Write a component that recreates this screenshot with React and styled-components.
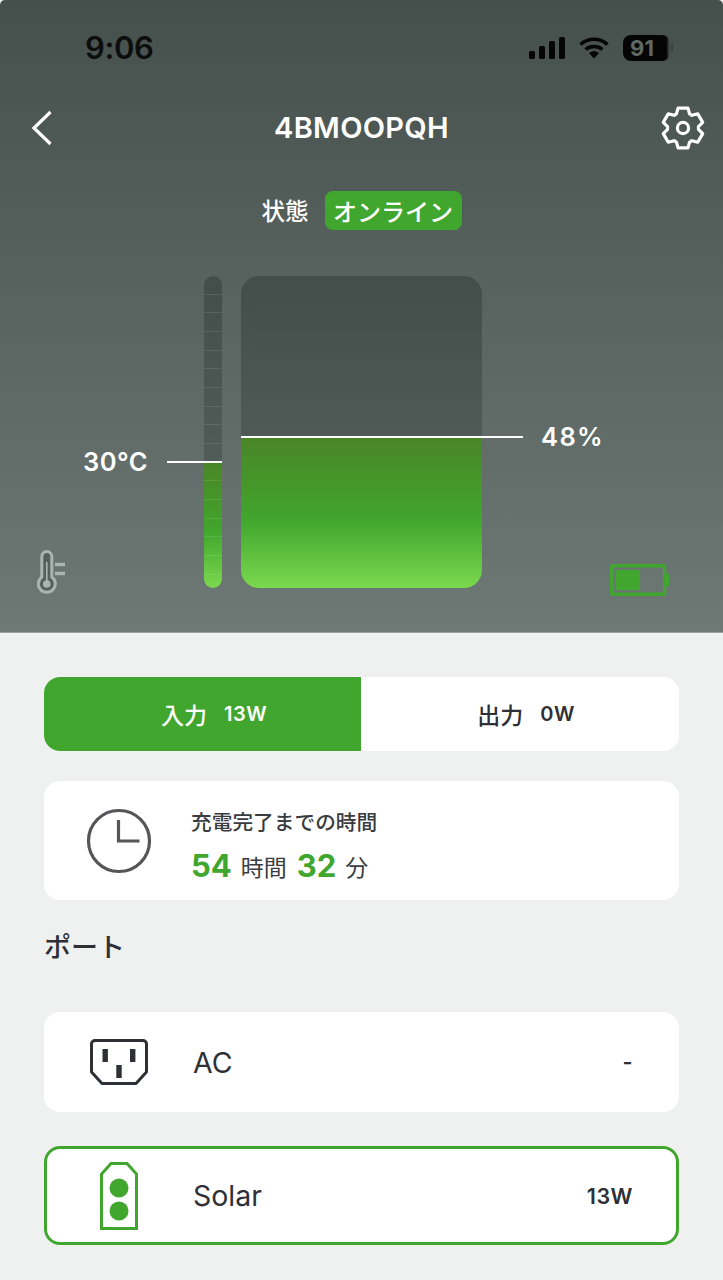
import React from "react";
import styled, { createGlobalStyle } from "styled-components";

const GREEN = "#41a62d";
const INK = "#2e3036";

const GlobalStyle = createGlobalStyle`
  html, body {
    margin: 0;
    padding: 0;
    background: #eff1f1;
  }
  body {
    font-family: Inter, "Noto Sans CJK JP", sans-serif;
  }
`;

const Page = styled.div`
  width: 723px;
  height: 1280px;
  overflow: hidden;
  display: flex;
  flex-direction: column;
  background: #eff1f1;
`;

const Hero = styled.section`
  height: 633px;
  box-sizing: border-box;
  background: linear-gradient(180deg, #454f4b 0%, #6e7975 100%);
  border-bottom: 1px solid #9aa19e;
  border-radius: 5px 5px 0 0;
  color: #fff;
`;

const StatusBar = styled.div`
  height: 96px;
  box-sizing: border-box;
  padding: 30px 53px 0 85px;
  display: flex;
  justify-content: space-between;
  align-items: flex-start;
`;

const Clock = styled.span`
  font-size: 31px;
  line-height: 36px;
  font-weight: 600;
  letter-spacing: -0.4px;
  color: #0c0e0d;
`;

const StatusIcons = styled.div`
  display: flex;
  align-items: center;
  gap: 14px;
  height: 36px;
`;

const PhoneBattery = styled.div`
  position: relative;
  width: 47px;
  height: 26px;
  border-radius: 8px;
  background: linear-gradient(90deg, #050505 0%, #050505 92%, #4d5854 100%);
  color: #5e6965;
  font-size: 22px;
  font-weight: 700;
  line-height: 26px;
  padding-right: 9px;
  box-sizing: border-box;
  text-align: center;

  &::after {
    content: "";
    position: absolute;
    right: -3px;
    top: 8px;
    width: 2px;
    height: 9px;
    border-radius: 1px;
    background: #38423e;
  }
`;

const NavBar = styled.div`
  height: 64px;
  box-sizing: border-box;
  padding: 0 17px 0 31px;
  display: grid;
  grid-template-columns: 1fr auto 1fr;
  align-items: center;

  & > svg:last-child {
    justify-self: end;
  }
`;

const Title = styled.h1`
  margin: 0 14px 2px 0;
  font-size: 29px;
  font-weight: 600;
  letter-spacing: 0.3px;
`;

const StatusRow = styled.div`
  margin-top: 30px;
  display: flex;
  justify-content: center;
  align-items: center;
  gap: 16px;
  height: 40px;
  font-size: 23.5px;
  font-weight: 500;
`;

const Pill = styled.span`
  background: ${GREEN};
  border-radius: 8px;
  height: 39px;
  padding: 0 8.5px;
  display: flex;
  align-items: center;
  font-size: 24px;
  font-weight: 500;
`;

const GaugeRow = styled.div`
  margin-top: 46px;
  height: 312px;
  display: flex;
  align-items: stretch;
`;

const ThermoSlot = styled.div`
  width: 204px;
  box-sizing: border-box;
  padding-left: 37px;
  display: flex;
  align-items: flex-end;
`;

const BatterySlot = styled.div`
  flex: 1;
  box-sizing: border-box;
  padding: 0 0 0 128px;
  display: flex;
  align-items: flex-end;
`;

const Gauge = styled.div`
  position: relative;
  flex: none;
  width: ${(p) => p.$width}px;
  border-radius: ${(p) => p.$radius}px;
  margin-right: ${(p) => p.$gap || 0}px;
  background: linear-gradient(180deg, #434d49 0%, #5b6662 100%);
`;

const GaugeClip = styled.div`
  position: absolute;
  inset: 0;
  border-radius: inherit;
  overflow: hidden;
`;

const GaugeFill = styled.div`
  position: absolute;
  left: 0;
  right: 0;
  bottom: 0;
  background: linear-gradient(180deg, #4a8527 0%, #41a62d 55%, #7bd94f 100%);
`;

const Ticks = styled.div`
  position: absolute;
  inset: 0;
  background-image: repeating-linear-gradient(
    180deg,
    transparent 0,
    transparent 17.67px,
    rgba(255, 255, 255, 0.1) 17.67px,
    rgba(255, 255, 255, 0.1) 18.67px
  );
`;

const Marker = styled.div`
  position: absolute;
  height: 2px;
  background: #fff;
  left: ${(p) => p.$left}px;
  width: ${(p) => p.$width}px;
  top: ${(p) => p.$top}px;
`;

const MarkerLabel = styled.span`
  position: absolute;
  top: ${(p) => p.$top}px;
  left: ${(p) => p.$left}px;
  font-size: 25.5px;
  line-height: 30px;
  font-weight: 600;
  letter-spacing: ${(p) => p.$spacing}px;
  white-space: nowrap;
`;

const Panel = styled.main`
  flex: 1;
  padding: 44px 44px 0;
  display: flex;
  flex-direction: column;
`;

const Tabs = styled.div`
  height: 74px;
  display: flex;
  border-radius: 16px;
  overflow: hidden;
  background: #fff;
`;

const Tab = styled.div`
  flex: ${(p) => (p.$active ? "0 0 317px" : "1")};
  box-sizing: border-box;
  padding-left: ${(p) => (p.$active ? 23 : 12)}px;
  display: flex;
  align-items: center;
  justify-content: center;
  gap: 17px;
  background: ${(p) => (p.$active ? GREEN : "#fff")};
  color: ${(p) => (p.$active ? "#fff" : INK)};
`;

const TabLabel = styled.span`
  font-size: 23px;
  font-weight: 500;
`;

const TabValue = styled.span`
  font-size: 20px;
  font-weight: 600;
  letter-spacing: 0.5px;
`;

const Card = styled.div`
  background: #fff;
  border-radius: 16px;
  display: flex;
  align-items: center;
  box-sizing: border-box;
`;

const TimeCard = styled(Card)`
  margin-top: 30px;
  height: 119px;
`;

const IconSlot = styled.div`
  flex: none;
  width: 149px;
  display: flex;
  justify-content: center;
`;

const TimeBody = styled.div`
  display: flex;
  flex-direction: column;
  gap: 11px;
  margin: 11px 0 0 -2px;
`;

const TimeCaption = styled.div`
  font-size: 20.7px;
  line-height: 28px;
  font-weight: 500;
  color: #3a3c40;
`;

const TimeRow = styled.div`
  display: flex;
  align-items: center;
  height: 36px;
  color: #3a3c40;
`;

const TimeNumber = styled.span`
  font-size: 31px;
  font-weight: 700;
  color: ${GREEN};
  margin-right: 9px;
`;

const TimeUnit = styled.span`
  font-size: 23px;
  font-weight: 400;
  margin-right: 10px;
`;

const SectionTitle = styled.h2`
  margin: 29px 0 0;
  font-size: 27px;
  line-height: 38px;
  font-weight: 500;
  color: ${INK};
  height: 45px;
`;

const PortCard = styled(Card)`
  height: ${(p) => (p.$selected ? 99 : 100)}px;
  margin-top: ${(p) => p.$top}px;
  border: ${(p) => (p.$selected ? `3px solid ${GREEN}` : "none")};
  padding-right: ${(p) => (p.$selected ? 43 : 46)}px;
`;

const PortIcon = styled(IconSlot)`
  margin-left: ${(p) => (p.$selected ? -3 : 0)}px;
`;

const PortName = styled.span`
  flex: 1;
  font-size: 28.5px;
  font-weight: 400;
  color: ${INK};
`;

const PortValue = styled.span`
  font-size: 21.5px;
  font-weight: 600;
  letter-spacing: 0.5px;
  color: ${INK};
`;

const SignalIcon = () => (
  <svg width="36" height="22" viewBox="0 0 36 22" fill="#050505">
    <rect x="0" y="14" width="6" height="8" rx="1.5" />
    <rect x="10" y="9" width="6" height="13" rx="1.5" />
    <rect x="20" y="4" width="6" height="18" rx="1.5" />
    <rect x="30" y="0" width="6" height="22" rx="1.5" />
  </svg>
);

const WifiIcon = () => (
  <svg width="30" height="22" viewBox="0 0 30 22" fill="none" stroke="#050505" strokeWidth="3.6">
    <path d="M1.5 7.5 C9 0.5 21 0.5 28.5 7.5" />
    <path d="M6.5 12.5 C11 8.5 19 8.5 23.5 12.5" />
    <path d="M10 16 L15 21.5 L20 16 C17 13.6 13 13.6 10 16 Z" fill="#050505" stroke="none" />
  </svg>
);

const BackIcon = () => (
  <svg width="22" height="36" viewBox="0 0 22 36" fill="none" stroke="#fff" strokeWidth="3.2">
    <path d="M19.5 2 L3 18 L19.5 34" />
  </svg>
);

// gear outline from polar points, six teeth with one pointing straight up
const gearPath = () => {
  const cx = 23;
  const cy = 23;
  const pts = [];
  for (let i = 0; i < 6; i++) {
    const a = i * 60 - 90;
    [[-25, 15.5], [-14, 20.5], [14, 20.5], [25, 15.5]].forEach(([da, r]) => {
      const rad = ((a + da) * Math.PI) / 180;
      pts.push(`${(cx + r * Math.cos(rad)).toFixed(2)} ${(cy + r * Math.sin(rad)).toFixed(2)}`);
    });
  }
  return `M${pts.join(" L")} Z`;
};

const GearIcon = () => (
  <svg width="46" height="46" viewBox="0 0 46 46" fill="none" stroke="#fff" strokeWidth="3.2" strokeLinejoin="round">
    <path d={gearPath()} />
    <circle cx="23" cy="23" r="5.6" />
  </svg>
);

const ThermoIcon = () => (
  <svg width="30" height="44" viewBox="0 0 30 44" fill="none" stroke="#a9b5b1" strokeWidth="3" style={{ marginBottom: -6 }}>
    <path d="M4.8 27 V6.5 A5 5 0 0 1 14.8 6.5 V27 A8.5 8.5 0 1 1 4.8 27 Z" fill="#565f5c" />
    <path d="M9.8 12 V33" strokeWidth="1.6" />
    <circle cx="9.8" cy="34" r="3.8" fill="#a9b5b1" stroke="none" />
    <path d="M18 14.5 H28 M18 23.5 H28" strokeWidth="3.4" />
  </svg>
);

const BatteryIcon = () => (
  <svg width="60" height="32" viewBox="0 0 60 32" style={{ marginBottom: -8 }}>
    <rect x="1.7" y="1.7" width="53" height="28.6" rx="1.5" fill="none" stroke={GREEN} strokeWidth="3.4" />
    <rect x="6" y="6" width="24" height="20" fill={GREEN} />
    <rect x="55" y="10" width="4" height="12" rx="1" fill={GREEN} />
  </svg>
);

const ClockIcon = () => (
  <svg width="66" height="66" viewBox="0 0 66 66" fill="none" stroke="#55555a" strokeWidth="3.2">
    <circle cx="33" cy="33" r="30.5" />
    <path d="M32.5 12 V33 H53.5" />
  </svg>
);

const OutletIcon = () => (
  <svg width="58" height="46" viewBox="0 0 58 46" fill="none" stroke={INK} strokeWidth="3">
    <path d="M5 1.5 H53 A3.5 3.5 0 0 1 56.5 5 V33 L46 44.5 H12 L1.5 33 V5 A3.5 3.5 0 0 1 5 1.5 Z" strokeLinejoin="round" />
    <rect x="12.5" y="10" width="5.4" height="13" fill={INK} stroke="none" />
    <rect x="40" y="10" width="5.4" height="13" fill={INK} stroke="none" />
    <rect x="26.3" y="26" width="5.4" height="13" fill={INK} stroke="none" />
  </svg>
);

const SolarIcon = () => (
  <svg width="38" height="68" viewBox="0 0 38 68" fill="none" stroke={GREEN} strokeWidth="3">
    <path d="M1.5 66.5 V12 L11 1.5 H27 L36.5 12 V66.5 Z" />
    <circle cx="19" cy="26" r="9.5" fill={GREEN} stroke="none" />
    <circle cx="19" cy="49" r="9.5" fill={GREEN} stroke="none" />
  </svg>
);

const App = () => {
  return (
    <Page>
      <GlobalStyle />
      <Hero>
        <StatusBar>
          <Clock>9:06</Clock>
          <StatusIcons>
            <SignalIcon />
            <WifiIcon />
            <PhoneBattery>91</PhoneBattery>
          </StatusIcons>
        </StatusBar>
        <NavBar>
          <BackIcon />
          <Title>4BMOOPQH</Title>
          <GearIcon />
        </NavBar>
        <StatusRow>
          <span>状態</span>
          <Pill>オンライン</Pill>
        </StatusRow>
        <GaugeRow>
          <ThermoSlot>
            <ThermoIcon />
          </ThermoSlot>
          <Gauge $width={18} $radius={9} $gap={19}>
            <GaugeClip>
              <GaugeFill style={{ height: "40.4%" }} />
              <Ticks />
            </GaugeClip>
            <Marker $left={-37} $width={55} $top={185} />
            <MarkerLabel $left={-121} $top={171} $spacing={0.5}>30°C</MarkerLabel>
          </Gauge>
          <Gauge $width={241} $radius={18}>
            <GaugeClip>
              <GaugeFill style={{ height: "48%" }} />
            </GaugeClip>
            <Marker $left={0} $width={282} $top={160} />
            <MarkerLabel $left={300} $top={146} $spacing={1.4}>48%</MarkerLabel>
          </Gauge>
          <BatterySlot>
            <BatteryIcon />
          </BatterySlot>
        </GaugeRow>
      </Hero>
      <Panel>
        <Tabs>
          <Tab $active>
            <TabLabel>入力</TabLabel>
            <TabValue>13W</TabValue>
          </Tab>
          <Tab>
            <TabLabel>出力</TabLabel>
            <TabValue>0W</TabValue>
          </Tab>
        </Tabs>
        <TimeCard>
          <IconSlot>
            <ClockIcon />
          </IconSlot>
          <TimeBody>
            <TimeCaption>充電完了までの時間</TimeCaption>
            <TimeRow>
              <TimeNumber>54</TimeNumber>
              <TimeUnit>時間</TimeUnit>
              <TimeNumber>32</TimeNumber>
              <TimeUnit>分</TimeUnit>
            </TimeRow>
          </TimeBody>
        </TimeCard>
        <SectionTitle>ポート</SectionTitle>
        <PortCard $top={38}>
          <PortIcon>
            <OutletIcon />
          </PortIcon>
          <PortName>AC</PortName>
          <PortValue>-</PortValue>
        </PortCard>
        <PortCard $selected $top={34}>
          <PortIcon $selected>
            <SolarIcon />
          </PortIcon>
          <PortName>Solar</PortName>
          <PortValue>13W</PortValue>
        </PortCard>
      </Panel>
    </Page>
  );
};

export default App;
